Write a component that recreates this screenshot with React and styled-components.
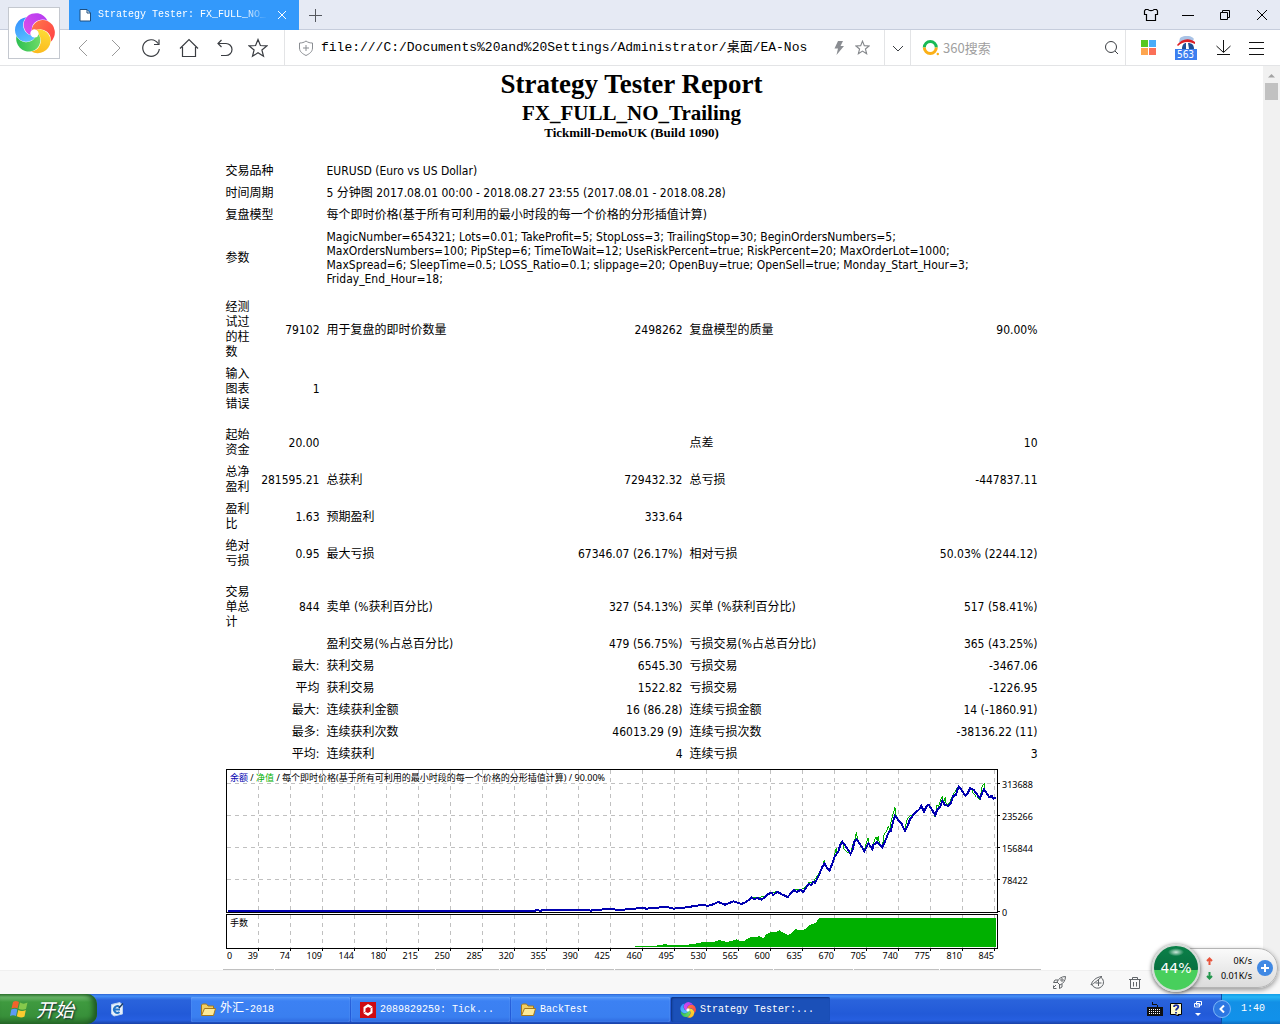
import React from 'react';
import styled, { createGlobalStyle, css } from 'styled-components';

const sans = '"DejaVu Sans Condensed", "Noto Sans", "Noto Sans CJK SC", sans-serif';
const noto = '"Noto Sans", "Noto Sans CJK SC", sans-serif';
const mono = '"Liberation Mono", "Noto Sans CJK SC", monospace';
const serif = '"Liberation Serif", "Noto Sans CJK SC", serif';

const GlobalStyle = createGlobalStyle`
  * { box-sizing: border-box; }
  body { margin: 0; background: #fff; color: #000; font-family: ${sans}; }
  button { border: 0; background: none; padding: 0; color: inherit; font: inherit; }
  svg { display: block; flex: none; }
`;

const Window = styled.div`
  position: relative;
  display: flex;
  flex-direction: column;
  height: 100vh;
  overflow: hidden;
`;

/* ---------- browser chrome ---------- */

const TabStrip = styled.header`
  flex: none;
  display: flex;
  align-items: stretch;
  height: 30px;
  padding-left: 69px;
  background: #e6eaf4;
  border-bottom: 1px solid #c6cddc;
`;

const Tab = styled.div`
  display: flex;
  align-items: center;
  gap: 7px;
  width: 230px;
  height: 30px;
  padding: 0 10px;
  background: #3399fb;
  color: #fff;
`;

const TabTitle = styled.span`
  flex: 1;
  white-space: nowrap;
  font: 10px/16px ${mono};
  mask-image: linear-gradient(90deg, #000 86%, transparent 100%);
`;

const TabButton = styled.button`
  display: grid;
  place-items: center;
  width: ${(p) => p.$w || 34}px;
`;

const WindowButtons = styled.div`
  display: flex;
  margin-left: auto;
`;

const LogoButton = styled.button`
  position: absolute;
  left: 8px;
  top: 7px;
  width: 52px;
  height: 52px;
  display: grid;
  place-items: center;
  background: #fff;
  border: 1px solid #c4c8cf;
`;

const Toolbar = styled.nav`
  flex: none;
  display: flex;
  height: 36px;
  padding-left: 66px;
  background: #fff;
  border-bottom: 1px solid #e3e4e6;
`;

const ToolButton = styled.button`
  flex: none;
  display: grid;
  place-items: center;
  width: ${(p) => p.$w || 35}px;
  color: ${(p) => p.$color || '#3a3d42'};
`;

const AddressBox = styled.div`
  flex: 1;
  display: flex;
  align-items: center;
  min-width: 0;
  margin-left: 9px;
  padding: 0 10px 0 13px;
  border-left: 1px solid #e3e4e6;
`;

const AddressInput = styled.input`
  flex: 1;
  min-width: 0;
  margin: 0 8px 0 7px;
  padding: 0;
  border: 0;
  outline: 0;
  background: none;
  color: #000;
  font: 13px/20px ${mono};
`;

const Cell = styled.div`
  flex: none;
  display: flex;
  align-items: center;
  justify-content: center;
  width: ${(p) => p.$w}px;
  padding: ${(p) => p.$pad || '0'};
  border-left: 1px solid #e3e4e6;
`;

const SearchInput = styled.input`
  flex: 1;
  min-width: 0;
  margin-left: 4px;
  padding: 0;
  border: 0;
  outline: 0;
  font: 13px/20px "Noto Sans CJK SC", sans-serif;
  &::placeholder { color: #a0a0a0; opacity: 1; }
`;

const Badge = styled.span`
  display: block;
  width: 22px;
  background: #3d7ff0;
  color: #fff;
  font: 10px/11px ${sans};
  text-align: center;
`;

/* ---------- report page ---------- */

const Viewport = styled.div`
  flex: 1;
  min-height: 0;
  display: flex;
`;

const Page = styled.main`
  flex: 1;
  min-width: 0;
  overflow: hidden;
  padding-top: 2px;
`;

const Scrollbar = styled.div`
  width: 17px;
  padding: 7px 2px;
  background: #f1f1f1;
`;

const Thumb = styled.div`
  height: 17px;
  margin-top: 5px;
  background: #c1c1c1;
`;

const Heading = styled.h1`
  margin: 0;
  text-align: center;
  font: bold ${(p) => p.$size}px/${(p) => p.$line}px ${serif};
`;

const Report = styled.table`
  width: 100%;
  max-width: 820px;
  margin: 20px auto 0;
  table-layout: fixed;
  border-spacing: 1px;
  font: 12px/15px ${sans};
`;

const Data = styled.td`
  padding: 3px;
  vertical-align: middle;
  text-align: ${(p) => (p.$right ? 'right' : 'left')};
  ${(p) => p.$right && css`white-space: nowrap;`}
`;

const Params = styled.td`
  padding: 3px;
  line-height: 14px;
  white-space: nowrap;
`;

const Spacer = styled.td`
  height: ${(p) => p.$h}px;
  padding: 0;
`;

const ChartCell = styled.td`
  padding: 3px 0 0 4px;
`;

const Orders = styled.table`
  width: 100%;
  max-width: 820px;
  margin: 0 auto;
  table-layout: fixed;
  border-spacing: 1px;
  th { height: 20px; padding: 0; background: #c0c0c0; }
`;

const StatusBar = styled.footer`
  flex: none;
  display: flex;
  justify-content: flex-end;
  align-items: center;
  gap: 22px;
  height: 24px;
  padding-right: 137px;
  background: #f8f8f8;
  border-top: 1px solid #f0f0f0;
  color: #606468;
`;

/* ---------- speed widget ---------- */

const Speed = styled.aside`
  position: absolute;
  right: 2px;
  bottom: 32px;
  display: flex;
  align-items: center;
`;

const Ball = styled.div`
  z-index: 1;
  display: grid;
  place-items: center;
  width: 48px;
  height: 48px;
  border: 2px solid #d6dcd8;
  border-radius: 50%;
  background: radial-gradient(8px 4px at 50% 14%, #cfe8dc, transparent),
    linear-gradient(#0a8048, #087040 54%, #48cf5c 54%);
  box-shadow: 0 1px 4px #555;
  color: #fff;
  font: 14px/18px "DejaVu Sans", sans-serif;
`;

const Pill = styled.div`
  display: flex;
  align-items: center;
  gap: 5px;
  height: 40px;
  margin-left: -24px;
  padding: 0 4px 0 29px;
  border: 1px solid #b4b4b4;
  border-radius: 0 20px 20px 0;
  background: linear-gradient(#fafafa, #dcdcdc);
  box-shadow: 0 2px 5px #0006;
`;

const Rate = styled.div`
  display: flex;
  align-items: center;
  justify-content: space-between;
  width: 46px;
  font: 9px/15px ${noto};
`;

const Add = styled.button`
  display: grid;
  place-items: center;
  width: 16px;
  height: 16px;
  border-radius: 50%;
  background: #4089e4;
`;

/* ---------- taskbar ---------- */

const Taskbar = styled.footer`
  flex: none;
  display: flex;
  align-items: stretch;
  height: 30px;
  background: linear-gradient(#2b62d2 0, #4590f8 2px, #2a63dc 6px, #225ad8 20px, #265fe0 26px, #1941a5 30px);
  color: #fff;
  font: 10px/16px ${mono};
`;

const Start = styled.button`
  display: flex;
  align-items: center;
  gap: 6px;
  width: 97px;
  padding-left: 10px;
  border-radius: 0 10px 10px 0;
  background: linear-gradient(#3c8a3c 0, #6cb86c 3px, #3f9a3f 8px, #38903a 22px, #2a702b 30px);
  box-shadow: inset -4px 0 5px #1f5a22;
  font: italic 19px/28px "Noto Sans CJK SC", sans-serif;
  text-shadow: 1px 1px 2px #123;
`;

const QuickLaunch = styled.div`
  display: flex;
  align-items: center;
  width: 93px;
  padding-left: 12px;
`;

const Task = styled.button`
  display: flex;
  align-items: center;
  gap: 4px;
  width: 159px;
  margin: 3px 0 2px 1px;
  padding-left: 9px;
  border-radius: 2px;
  background: ${(p) => (p.$active ? '#1b50b8' : 'linear-gradient(#5a9cfb, #3c81f3 4px, #3a7ff0 20px, #2f6be0)')};
  box-shadow: ${(p) => (p.$active ? 'inset 1px 1px 2px #0d3180' : 'inset 0 0 1px #9cc4ff')};
  white-space: nowrap;
`;

const Cjk = styled.span`
  font-size: 12px;
`;

const Tray = styled.div`
  display: flex;
  align-items: center;
  gap: 6px;
  margin-left: auto;
`;

const Clock = styled.div`
  display: flex;
  align-items: center;
  gap: 10px;
  align-self: stretch;
  width: 59px;
  margin-left: 8px;
  border-left: 1px solid #0e4fa8;
  background: linear-gradient(#139ee9 0, #26b5f5 3px, #1290e6 8px, #1191ea 26px, #0d6dc0 30px);
`;

const Chevron = styled.button`
  display: grid;
  place-items: center;
  width: 18px;
  height: 18px;
  margin-left: -9px;
  border: 1px solid #7fb8f8;
  border-radius: 50%;
  background: #2d77e2;
`;

const Icon = ({ w = 20, h = w, children, ...rest }) => (
  <svg width={w} height={h} viewBox={`0 0 ${w} ${h}`} fill="none" stroke="currentColor" aria-hidden="true" {...rest}>
    {children}
  </svg>
);

const blades = [
  ['#ff3f45', '#ff7a4a'],
  ['#fbb41a', '#fde03a'],
  ['#23bb50', '#7be06a'],
  ['#2f8cff', '#62c8ff'],
  ['#b23af2', '#e050e8'],
];
const Pinwheel = ({ size, name }) => (
  <svg width={size} height={size} viewBox="-20 -20 40 40" aria-hidden="true">
    <circle r="5" fill="#fff" />
    {blades.map(([a, b], i) => (
      <g key={a} transform={`rotate(${i * 72 - 12})`}>
        <linearGradient id={`${name}${i}`} x1="0" y1="0" x2="1" y2="1">
          <stop offset="0" stopColor={b} />
          <stop offset="1" stopColor={a} />
        </linearGradient>
        <path fill={`url(#${name}${i})`}
          d="M-2.1-3.4A11 11 0 0 1 15-9.400A12.500 12.500 0 0 1 13.600 11.400A10.500 10.500 0 0 0 2.600-3.100A4 4 0 0 0-2.100-3.400Z" />
      </g>
    ))}
  </svg>
);

const Folder = () => (
  <svg width="16" height="16" viewBox="0 0 16 16" aria-hidden="true">
    <path d="M1.500 13V3L2.500 2H6.500L8 4H13.500V13Z" fill="#f2cf62" stroke="#a5791c" />
    <path d="M1.500 13.500 4.500 6.500H15.500L13.500 13.500Z" fill="#fdeb9a" stroke="#a5791c" />
  </svg>
);

const starPath = 'M10 1.500 12.400 7.500 18.800 7.900 13.900 12 15.500 18.300 10 14.800 4.500 18.300 6.100 12 1.200 7.900 7.600 7.500Z';

/* ---------- report data ---------- */

const paramLines = [
  'MagicNumber=654321; Lots=0.01; TakeProfit=5; StopLoss=3; TrailingStop=30; BeginOrdersNumbers=5;',
  'MaxOrdersNumbers=100; PipStep=6; TimeToWait=12; UseRiskPercent=true; RiskPercent=20; MaxOrderLot=1000;',
  'MaxSpread=6; SleepTime=0.5; LOSS_Ratio=0.1; slippage=20; OpenBuy=true; OpenSell=true; Monday_Start_Hour=3;',
  'Friday_End_Hour=18;',
];

const summary = [
  ['交易品种', 'EURUSD (Euro vs US Dollar)'],
  ['时间周期', '5 分钟图 2017.08.01 00:00 - 2018.08.27 23:55 (2017.08.01 - 2018.08.28)'],
  ['复盘模型', '每个即时价格(基于所有可利用的最小时段的每一个价格的分形插值计算)'],
];

const results = [
  6,
  ['经测试过的柱数', '79102', '用于复盘的即时价数量', '2498262', '复盘模型的质量', '90.00%'],
  ['输入图表错误', '1', '', '', '', ''],
  8,
  ['起始资金', '20.00', '', '', '点差', '10'],
  ['总净盈利', '281595.21', '总获利', '729432.32', '总亏损', '-447837.11'],
  ['盈利比', '1.63', '预期盈利', '333.64', '', ''],
  ['绝对亏损', '0.95', '最大亏损', '67346.07 (26.17%)', '相对亏损', '50.03% (2244.12)'],
  8,
  ['交易单总计', '844', '卖单 (%获利百分比)', '327 (54.13%)', '买单 (%获利百分比)', '517 (58.41%)'],
  ['', '', '盈利交易(%占总百分比)', '479 (56.75%)', '亏损交易(%占总百分比)', '365 (43.25%)'],
  ['', '最大:', '获利交易', '6545.30', '亏损交易', '-3467.06'],
  ['', '平均', '获利交易', '1522.82', '亏损交易', '-1226.95'],
  ['', '最大:', '连续获利金额', '16 (86.28)', '连续亏损金额', '14 (-1860.91)'],
  ['', '最多:', '连续获利次数', '46013.29 (9)', '连续亏损次数', '-38136.22 (11)'],
  ['', '平均:', '连续获利', '4', '连续亏损', '3'],
];

const xTicks = [39, 74, 109, 144, 180, 215, 250, 285, 320, 355, 390, 425, 460, 495, 530, 565, 600, 635, 670, 705, 740, 775, 810, 845];
const yTicks = [313688, 235266, 156844, 78422, 0];

const balance = '-1176,452 -255,452 -250,449 -238,453 -230,449 -95,449 -88,453 -80,449 -20,448 0,450 30,447 65,444 80,446 95,444 140,441 160,446 200,442 230,437 250,434 262,438 280,433 295,426 315,434 340,424 365,432 380,425 395,413 402,418 412,414 425,419 435,411 443,402 455,399 460,405 472,395 485,403 503,411 515,398 522,390 530,396 542,390 550,396 560,380 567,371 573,376 580,365 585,369 597,346 605,325 613,310 620,322 629,331 637,310 645,288 650,281 655,275 661,255 667,245 680,263 692,282 698,270 703,245 710,238 720,252 733,273 738,265 745,250 757,268 760,255 772,246 787,262 797,240 807,215 813,212 820,182 825,167 835,180 845,192 855,213 862,200 870,178 880,165 890,155 898,148 904,138 912,155 920,138 926,134 935,148 946,165 952,148 960,143 967,122 975,135 985,138 992,130 1000,108 1008,104 1012,90 1017,80 1027,93 1036,107 1043,100 1051,84 1062,90 1070,102 1080,115 1087,98 1092,87 1100,100 1108,112 1115,107 1120,116 1128,114';
const equity = '380,423 395,413 412,414 435,408 455,400 472,393 485,403 503,413 522,388 542,390 560,378 567,367 580,366 597,340 608,318 613,301 617,322 628,330 640,300 649,265 652,280 661,250 667,242 672,268 680,276 692,280 700,250 706,236 709,217 713,240 733,273 740,245 744,235 748,255 757,270 763,242 769,230 772,245 775,227 778,250 787,262 792,225 800,212 805,198 809,212 814,180 820,160 825,142 829,172 840,185 855,210 860,180 870,168 885,160 904,140 912,152 926,134 940,158 946,172 950,135 955,140 962,120 967,109 971,128 976,111 979,138 990,125 1000,104 1012,84 1017,82 1036,110 1051,80 1060,100 1070,112 1080,118 1086,82 1093,69 1095,95 1108,114 1128,114';
const lots = '45,561 45,559 68,557 110,557 113,555 135,553 155,555 205,555 208,552 225,552 230,550 250,546 283,546 290,543 298,540 320,546 335,543 350,538 360,543 370,545 380,537 390,532 400,530 412,530 415,528 430,534 440,522 455,515 468,517 478,511 487,517 495,520 505,526 515,518 527,506 535,511 550,510 560,504 568,495 585,490 598,475 1128,475 1128,561';

const Chart = () => (
  <svg width="812" height="198" viewBox="226 769 812 198" role="img" aria-label="余额 / 净值" fontFamily={noto} fontSize="9" shapeRendering="crispEdges">
    <g stroke="#c0c0c0" strokeDasharray="4 4">
      {xTicks.map((t, i) => <path key={t} d={`M${258.5 + i * 32} 770V912M${258.5 + i * 32} 915V948`} />)}
      {[0, 1, 2, 3].map((i) => <path key={i} d={`M227 ${783.5 + i * 32}H997`} />)}
    </g>
    <g stroke="#000">
      <rect x="226.500" y="769.500" width="771" height="143" fill="none" />
      <rect x="226.500" y="914.500" width="771" height="34" fill="none" />
      {xTicks.map((t, i) => <path key={t} d={`M${258.5 + i * 32} 948v3`} />)}
      {yTicks.map((t, i) => <path key={t} d={`M997 ${783.5 + i * 32}h3`} />)}
    </g>
    <g transform="translate(620 760) scale(0.3333)" fill="none">
      <polygon points={lots} fill="#00b000" />
      <polyline points={equity} stroke="#00b000" strokeWidth="3" />
      <polyline points={balance} stroke="#0000b0" strokeWidth="6" />
    </g>
    <text x="230" y="781">
      <tspan fill="#0000b0">余额</tspan> / <tspan fill="#00b000">净值</tspan> / 每个即时价格(基于所有可利用的最小时段的每一个价格的分形插值计算) / 90.00%
    </text>
    <text x="230" y="926">手数</text>
    <text x="227" y="959">0</text>
    {xTicks.map((t, i) => <text key={t} x={258 + i * 32} y="959" textAnchor="end">{t}</text>)}
    {yTicks.map((t, i) => <text key={t} x="1002" y={788 + i * 32}>{t}</text>)}
  </svg>
);

export default function App() {
  return (
    <Window>
      <GlobalStyle />
      <TabStrip>
        <Tab>
          <Icon w={12} h={14} stroke="#1d4f80">
            <path d="M1 1.500H8L11.500 5V13H1Z" fill="#fff" />
            <path d="M8 1.500V5H11.500" />
          </Icon>
          <TabTitle>Strategy Tester: FX_FULL_NO_</TabTitle>
          <TabButton $w={14} aria-label="关闭标签"><Icon w={10} stroke="#fff"><path d="M1 1 9 9M9 1 1 9" /></Icon></TabButton>
        </Tab>
        <TabButton aria-label="新标签"><Icon w={14} stroke="#55585e"><path d="M6.500 1V14M0 7.500H13" /></Icon></TabButton>
        <WindowButtons>
          <TabButton $w={37} aria-label="皮肤">
            <Icon w={16} h={14}><path d="M5 1.500C6 3 10 3 11 1.500H13.500L14.500 3V6.500H12.500V12.500H3.500V6.500H1.500V3L2.500 1.500Z" strokeWidth="1.200" /></Icon>
          </TabButton>
          <TabButton $w={37} aria-label="最小化"><Icon w={12} stroke="#000"><path d="M0 6.500H12" /></Icon></TabButton>
          <TabButton $w={37} aria-label="还原">
            <Icon w={12} stroke="#000"><path d="M1.500 3.500H8.500V10.500H1.500ZM3.500 3V1.500H10.500V8.500H9" /></Icon>
          </TabButton>
          <TabButton $w={37} aria-label="关闭"><Icon w={12} stroke="#000"><path d="M1 1 11 11M11 1 1 11" /></Icon></TabButton>
        </WindowButtons>
      </TabStrip>

      <Toolbar>
        <ToolButton $w={33} $color="#999" aria-label="后退"><Icon><path d="M14 2 6 10 14 18" /></Icon></ToolButton>
        <ToolButton $w={33} $color="#999" aria-label="前进"><Icon><path d="M6 2 14 10 6 18" /></Icon></ToolButton>
        <ToolButton $w={38} aria-label="刷新"><Icon><path d="M17 5.500A8.300 8.300 0 1 0 18.300 11M18 1.500V6.500H13" strokeWidth="1.200" /></Icon></ToolButton>
        <ToolButton $w={38} aria-label="主页"><Icon><path d="M1 10.500 10 1.500 19 10.500M3.500 9V18.500H16.500V9" strokeWidth="1.200" /></Icon></ToolButton>
        <ToolButton $w={33} aria-label="恢复"><Icon><path d="M6.500 2 3 5.500 6.500 9M3 5.500H11A6 6 0 0 1 11 17.500H6" strokeWidth="1.200" /></Icon></ToolButton>
        <ToolButton $w={34} aria-label="收藏"><Icon><path d={starPath} strokeWidth="1.200" /></Icon></ToolButton>
        <AddressBox>
          <Icon w={16} stroke="#8a8d92"><path d="M8 1C10 2.500 12 3 14.500 3V8C14.500 12 11 14 8 15.500C5 14 1.500 12 1.500 8V3C4 3 6 2.500 8 1ZM8 5V11M5 8H11" /></Icon>
          <AddressInput aria-label="地址" defaultValue="file:///C:/Documents%20and%20Settings/Administrator/桌面/EA-Nos" />
          <ToolButton $w={22} aria-label="极速模式">
            <Icon w={12} h={16} stroke="none"><path d="M5 1H10L7.500 6H11L3.500 15 5 8.500H1.500Z" fill="#8a8d92" /></Icon>
          </ToolButton>
          <ToolButton $w={24} $color="#85888c" aria-label="收藏此页"><Icon w={15} viewBox="0 0 20 20"><path d={starPath} strokeWidth="1.500" /></Icon></ToolButton>
        </AddressBox>
        <Cell $w={26}><ToolButton $w={20} aria-label="展开"><Icon w={14}><path d="M2 5 7 10 12 5" /></Icon></ToolButton></Cell>
        <Cell $w={215} $pad="0 6px 0 11px">
          <Icon w={17} strokeWidth="3">
            <path d="M2.300 8.500A6 6 0 0 1 14.300 8.500" stroke="#19b955" />
            <path d="M14.300 8.500A6 6 0 0 1 2.300 8.500" stroke="#fbb017" />
            <circle cx="15.800" cy="15" r="1.200" fill="#fbb017" stroke="none" />
          </Icon>
          <SearchInput aria-label="搜索" placeholder="360搜索" />
          <ToolButton $w={16} aria-label="搜索"><Icon w={15}><circle cx="7" cy="7" r="5.500" /><path d="M11 11 14 14" /></Icon></ToolButton>
        </Cell>
        <Cell $w={155} $pad="0 7px 0 3px">
          <ToolButton $w={38} aria-label="扩展">
            <Icon w={15} stroke="none">
              <path d="M0 0H7V7H0Z" fill="#55c820" /><path d="M8 0H15V7H8Z" fill="#4aacf8" />
              <path d="M0 8H7V15H0Z" fill="#fda54f" /><path d="M8 8H15V15H8Z" fill="#fb7058" />
            </Icon>
          </ToolButton>
          <ToolButton $w={37} aria-label="下载速度">
            <span>
              <Icon w={22} h={13} stroke="none">
                <path d="M5 2C9-1 16-1 19 3L17 6H4Z" fill="#a9c3e6" />
                <path d="M2 9C6 3 14 1 20 6V8C14 5 8 5 3 10Z" fill="#dc1f26" />
                <path d="M7 13C7 9 9 7 11 7V13ZM13 7C17 7 19 9 19 13H14Z" fill="#1d4f96" />
              </Icon>
              <Badge>563</Badge>
            </span>
          </ToolButton>
          <ToolButton $w={37} $color="#111" aria-label="下载"><Icon w={16}><path d="M8.500 0V12M1.500 6 8.500 12.500 15.500 6M2 14.500H15" /></Icon></ToolButton>
          <ToolButton $w={32} $color="#111" aria-label="菜单"><Icon w={16}><path d="M0 2.500H15M0 8.500H15M0 14.500H15" /></Icon></ToolButton>
        </Cell>
      </Toolbar>
      <LogoButton aria-label="浏览器菜单"><Pinwheel size={41} name="menu" /></LogoButton>

      <Viewport>
        <Page>
          <Heading $size={27} $line={32}>Strategy Tester Report</Heading>
          <Heading as="h2" $size={21} $line={26}>FX_FULL_NO_Trailing</Heading>
          <Heading as="h3" $size={13} $line={14}>Tickmill-DemoUK (Build 1090)</Heading>
          <Report>
            <colgroup>
              {[33, 66, 180, 181, 180, 173].map((w, i) => <col key={i} width={w} />)}
            </colgroup>
            <tbody>
              {summary.map(([label, value]) => (
                <tr key={label}><Data colSpan={2}>{label}</Data><Data colSpan={4}>{value}</Data></tr>
              ))}
              <tr>
                <Data colSpan={2}>参数</Data>
                <Params colSpan={4}>{paramLines.map((l) => <React.Fragment key={l}>{l}<br /></React.Fragment>)}</Params>
              </tr>
              {results.map((row, i) => Array.isArray(row) ? (
                <tr key={i}>{row.map((c, j) => <Data key={j} $right={j % 2 === 1}>{c || '\u00a0'}</Data>)}</tr>
              ) : (
                <tr key={i}><Spacer colSpan={6} $h={row} /></tr>
              ))}
              <tr><ChartCell colSpan={6}><Chart /></ChartCell></tr>
            </tbody>
          </Report>
          <Orders>
            <colgroup>
              {[51, 160, 63, 45, 68, 78, 79, 79, 85, 101].map((w, i) => <col key={i} width={w} />)}
            </colgroup>
            <thead><tr>{Array.from({ length: 10 }, (_, i) => <th key={i} />)}</tr></thead>
          </Orders>
        </Page>
        <Scrollbar>
          <Icon w={13} h={5} stroke="none"><path d="M3 4.500 6.500 1 10 4.500Z" fill="#a3a3a3" /></Icon>
          <Thumb />
        </Scrollbar>
      </Viewport>

      <StatusBar>
        <ToolButton $w={16} $color="#606468" aria-label="加速">
          <Icon w={15}><path d="M13.500 1.500C9 1.500 6.500 4 5 7L8 10C11 8.500 13.500 6 13.500 1.500ZM6 5H3L1.500 7.500H5M10 9V12L7.500 13.500V10M4 10 1.500 12.500M1.500 10.500V13.500H4.500" /><circle cx="10" cy="5" r="1.200" /></Icon>
        </ToolButton>
        <ToolButton $w={16} $color="#606468" aria-label="页面缩放">
          <Icon w={15}><path d="M10.500 2A6 6 0 1 1 2 9.500M1 10C2 6 6 2 12 1.500M1 10C4 8.500 8 5 12 1.500M8.500 5V11M5.500 8H11.500" /></Icon>
        </ToolButton>
        <ToolButton $w={16} $color="#606468" aria-label="清除">
          <Icon w={14}><path d="M1 3.500H13M4.500 3V1.500H9.500V3M2.500 4V12.500H11.500V4M5.500 6V10.500M8.500 6V10.500" /></Icon>
        </ToolButton>
      </StatusBar>

      <Taskbar>
        <Start>
          <svg width="20" height="20" viewBox="0 0 20 20" aria-hidden="true">
            <path d="M3 3C5 1.500 7 2 9 3L7.500 9.500C6 8.500 4 8.500 1.500 9.500Z" fill="#f0632c" />
            <path d="M10 3.500C12 5 15 5 17.500 3.500L16 10C13.500 11 11 11 8.500 9.800Z" fill="#86c94c" />
            <path d="M1.300 10.500C3.500 9.500 6 9.500 7.300 10.500L6 17C4 16 2 16 0 17Z" fill="#5c9bf5" />
            <path d="M8.300 11C10.500 12.300 13.500 12.300 15.800 11L14.500 17.500C12 19 9 18.500 6.800 17.300Z" fill="#fccb30" />
          </svg>
          开始
        </Start>
        <QuickLaunch>
          <Icon w={16}>
            <path d="M2.500 3.500 11 1.500 13.500 4V13L5 15 2.500 13Z" fill="#e8f1fb" stroke="#b8d2ef" />
            <path d="M10.500 6A3.300 3.300 0 1 0 10.500 11M5 8.500H11" stroke="#2475c8" strokeWidth="2" />
            <path d="M10 7 14 2.500" stroke="#1c3d66" strokeWidth="1.500" />
          </Icon>
        </QuickLaunch>
        <Task><Folder /><span><Cjk>外汇</Cjk>-2018</span></Task>
        <Task>
          <svg width="16" height="16" viewBox="0 0 16 16" aria-hidden="true">
            <path d="M0 0H16V16H0Z" fill="#cf0a12" />
            <path d="M8 2 12.500 4.500 10.500 6 8 5 5.500 6.500V9.500L3.500 11V5Z" fill="#fff" />
            <path d="M8 14 3.500 11.500 5.500 10 8 11 10.500 9.500V6.500L12.500 5V11Z" fill="#fff" />
          </svg>
          <span>2089829259: Tick...</span>
        </Task>
        <Task><Folder /><span>BackTest</span></Task>
        <Task $active><Pinwheel size={16} name="task" /><span>Strategy Tester:...</span></Task>
        <Tray>
          <Icon w={16} h={14} stroke="none">
            <path d="M5 0H6V2H10V3H11V5H16V14H0V5H10V3H5Z" fill="#111" />
            <path d="M2 7.500H14M2 9.500H14M2 11.500H14" stroke="#fff" strokeDasharray="1 1" />
          </Icon>
          <Icon w={14} h={14} stroke="#000">
            <path d="M1.500 1.500H12.500V12.500H9L10 14 6 12.500H1.500Z" fill="#fffbc8" />
            <path d="M5 5C5 2.500 9.300 2.500 9.300 5C9.300 6.500 7 6.500 7 8.500M7 10V11.500" stroke="#1a2a9c" strokeWidth="1.800" />
          </Icon>
          <Icon w={18} h={18} stroke="#fff">
            <path d="M7.500 1.500H12.500V5H7.500ZM5.500 3.500H10.500V7H5.500Z" /><path d="M6 13H12L9 16Z" fill="#fff" stroke="none" />
          </Icon>
          <Clock>
            <Chevron aria-label="显示隐藏的图标"><Icon w={8} stroke="#fff" strokeWidth="2"><path d="M6 .5 2.500 4 6 7.500" /></Icon></Chevron>
            <time>1:40</time>
          </Clock>
        </Tray>
      </Taskbar>

      <Speed>
        <Ball>44%</Ball>
        <Pill>
          <div>
            <Rate><Icon w={7} h={8} stroke="#e8543c" strokeWidth="2"><path d="M3.500 8V1.500M1 4 3.500 1.500 6 4" /></Icon>0K/s</Rate>
            <Rate><Icon w={7} h={8} stroke="#23964c" strokeWidth="2"><path d="M3.500 0V6.500M1 4 3.500 6.500 6 4" /></Icon>0.01K/s</Rate>
          </div>
          <Add aria-label="加速"><Icon w={8} stroke="#fff" strokeWidth="2"><path d="M4 0V8M0 4H8" /></Icon></Add>
        </Pill>
      </Speed>
    </Window>
  );
}
